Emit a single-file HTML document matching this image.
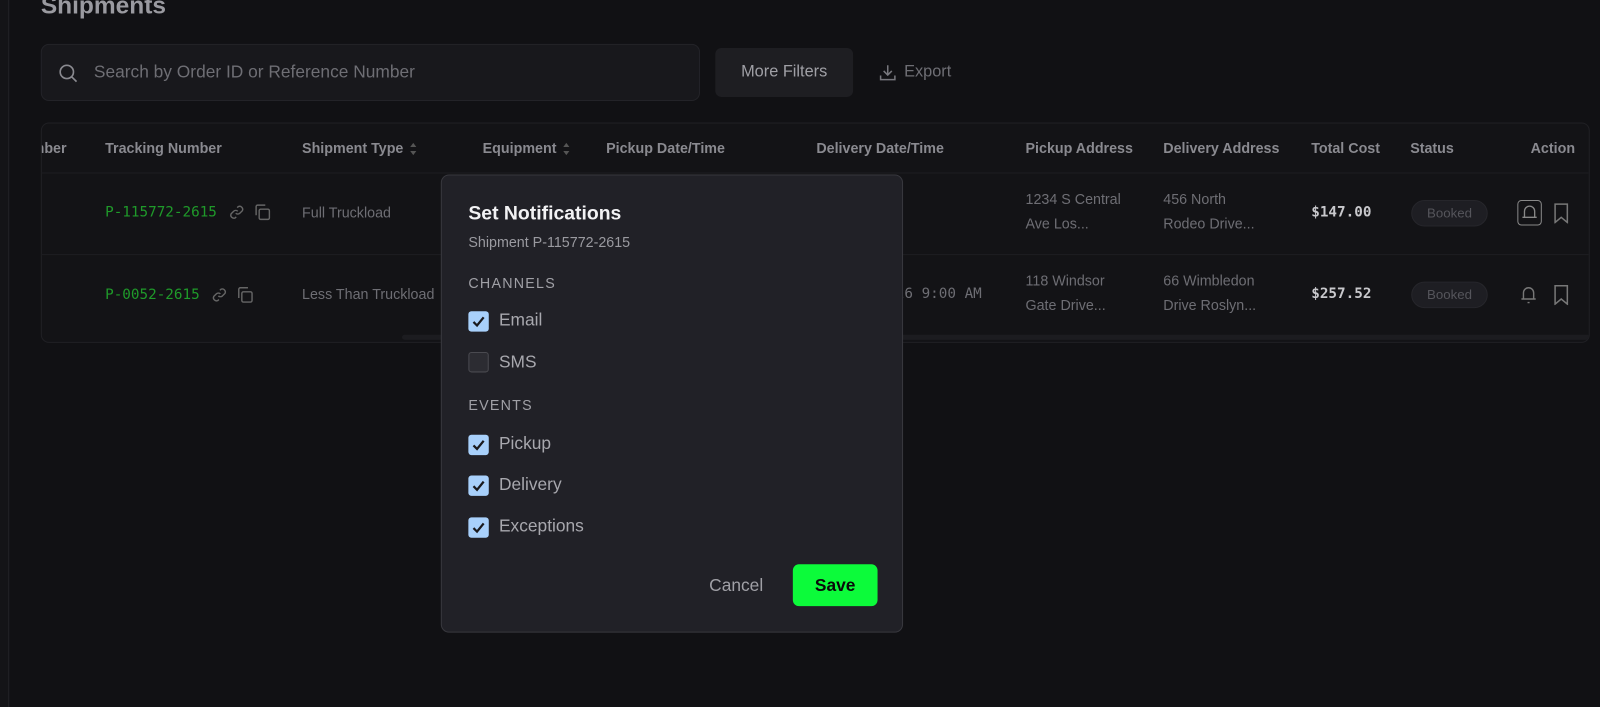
<!DOCTYPE html>
<html><head><meta charset="utf-8"><style>
*{box-sizing:border-box;margin:0;padding:0}
body{width:1600px;height:693px;background:#111114;font-family:"Liberation Sans",sans-serif;position:relative;overflow:hidden;color:#888}
#w{position:absolute;left:0;top:0;width:1568px;height:679px;transform:scale(1.0204);transform-origin:0 0}
.side{position:absolute;left:0;top:0;width:9px;height:693px;background:#141417;border-right:1px solid #222226}
.abs{position:absolute;white-space:nowrap}
h1{position:absolute;left:40px;top:-8px;font-size:24px;font-weight:bold;color:#9a9aa0}
.search{position:absolute;left:40px;top:43px;width:646px;height:56px;background:#18181c;border:1px solid #232328;border-radius:8px}
.btn{position:absolute;left:701px;top:47px;width:135px;height:48px;background:#1e1e22;border-radius:6px;color:#a0a0a6;font-size:16px;text-align:center;line-height:48px}
.table{position:absolute;left:40px;top:120px;width:1518px;height:216px;border:1px solid #202024;border-radius:8px;background:#131316;overflow:hidden}
.th{font-size:14px;font-weight:bold;color:#8a8a90;top:16px}
.mono{font-family:"DejaVu Sans Mono",monospace}
.g{color:#1f9a2a;font-size:14px}
.cell{font-size:14px;color:#6e6e74;line-height:24px}
.badge{position:absolute;width:75px;height:26px;border-radius:13px;background:#1e1e23;border:1px solid #26262b;color:#55555b;font-size:13px;text-align:center;line-height:24px}
.modal{position:absolute;left:432px;top:171px;width:453px;height:449px;background:#212127;border:1px solid #38383e;border-radius:8px}
.cb{position:absolute;left:26px;width:20px;height:20px;border-radius:3px;background:#a8d0fb}
.cb.off{background:#2c2c32;border:1px solid #4a4a50}
.lbl{position:absolute;left:56px;font-size:17px;color:#a8a8ae}
.sec{position:absolute;left:26px;font-size:14px;letter-spacing:1.2px;color:#a0a0a6}
.sort{display:inline-block;vertical-align:middle;margin-left:6px}
</style></head><body><div id="w">
<div class="side"></div>
<h1>Shipments</h1>
<div class="search">
<svg class="abs" style="left:16px;top:18px" width="20" height="20" viewBox="0 0 20 20" fill="none" stroke="#8a8a90" stroke-width="1.6"><circle cx="8.5" cy="8.5" r="6.5"/><path d="M13.5 13.5L18 18"/></svg>
<div class="abs" style="left:51px;top:17px;font-size:17px;color:#6e6e74">Search by Order ID or Reference Number</div>
</div>
<div class="btn">More Filters</div>
<svg class="abs" style="left:861px;top:62px" width="18" height="18" viewBox="0 0 18 18" fill="none" stroke="#77777d" stroke-width="1.5"><path d="M9 2v9M5 7.5l4 4 4-4M2 12v4h14v-4"/></svg>
<div class="abs" style="left:886px;top:62px;font-size:16px;color:#6e6e74">Export</div>

<div class="table">
<div class="abs" style="left:0;top:48px;width:1518px;height:1px;background:#1d1d21"></div>
<div class="abs" style="left:0;top:128px;width:1518px;height:1px;background:#1d1d21"></div>
<div class="abs" style="left:353px;top:207px;width:1165px;height:5px;background:#1c1c20;border-radius:3px"></div>
<div class="abs th" style="left:-10px">mber</div>
<div class="abs th" style="left:62px">Tracking Number</div>
<div class="abs th" style="left:255px">Shipment Type<svg class="sort" width="8" height="14" viewBox="0 0 8 14" fill="#555"><path d="M4 1l3 4H1zM4 13l3-4H1z"/></svg></div>
<div class="abs th" style="left:432px">Equipment<svg class="sort" width="8" height="14" viewBox="0 0 8 14" fill="#555"><path d="M4 1l3 4H1zM4 13l3-4H1z"/></svg></div>
<div class="abs th" style="left:553px">Pickup Date/Time</div>
<div class="abs th" style="left:759px">Delivery Date/Time</div>
<div class="abs th" style="left:964px">Pickup Address</div>
<div class="abs th" style="left:1099px">Delivery Address</div>
<div class="abs th" style="left:1244px">Total Cost</div>
<div class="abs th" style="left:1341px">Status</div>
<div class="abs th" style="left:1459px">Action</div>

<div class="abs mono g" style="left:62px;top:79px">P-115772-2615</div>
<svg class="abs" style="left:183px;top:79px" width="16" height="16" viewBox="0 0 16 16" fill="none" stroke="#666" stroke-width="1.4"><path d="M7 9a3 3 0 004 0l2.5-2.5a3 3 0 00-4-4L8.5 3.5M9 7a3 3 0 00-4 0L2.5 9.5a3 3 0 004 4l1-1"/></svg>
<svg class="abs" style="left:207px;top:78px" width="18" height="18" viewBox="0 0 18 18" fill="none" stroke="#666" stroke-width="1.4"><rect x="6" y="6" width="10" height="10" rx="1.5"/><path d="M3 12V3.5A1.5 1.5 0 014.5 2H12"/></svg>
<div class="abs cell" style="left:255px;top:75px">Full Truckload</div>
<div class="abs cell" style="left:964px;top:62px">1234 S Central<br>Ave Los...</div>
<div class="abs cell" style="left:1099px;top:62px">456 North<br>Rodeo Drive...</div>
<div class="abs mono" style="left:1244px;top:79px;font-size:14px;color:#c8c8cc;font-weight:bold">$147.00</div>
<div class="badge" style="left:1342px;top:75px">Booked</div>
<div class="abs" style="left:1446px;top:75px;width:24px;height:25px;border:1.5px solid #888;border-radius:4px"></div>
<svg class="abs" style="left:1449px;top:78px" width="18" height="18" viewBox="0 0 18 18" fill="none" stroke="#888" stroke-width="1.3"><path d="M4 14V8a5 5 0 0110 0v6M2 14h14"/></svg>
<svg class="abs" style="left:1481px;top:78px" width="16" height="20" viewBox="0 0 16 20" fill="none" stroke="#777" stroke-width="1.5"><path d="M2 1h12v18l-6-5-6 5z"/></svg>

<div class="abs mono g" style="left:62px;top:160px">P-0052-2615</div>
<svg class="abs" style="left:166px;top:160px" width="16" height="16" viewBox="0 0 16 16" fill="none" stroke="#666" stroke-width="1.4"><path d="M7 9a3 3 0 004 0l2.5-2.5a3 3 0 00-4-4L8.5 3.5M9 7a3 3 0 00-4 0L2.5 9.5a3 3 0 004 4l1-1"/></svg>
<svg class="abs" style="left:190px;top:159px" width="18" height="18" viewBox="0 0 18 18" fill="none" stroke="#666" stroke-width="1.4"><rect x="6" y="6" width="10" height="10" rx="1.5"/><path d="M3 12V3.5A1.5 1.5 0 014.5 2H12"/></svg>
<div class="abs cell" style="left:255px;top:155px">Less Than Truckload</div>
<div class="abs mono" style="left:820px;top:159px;font-size:14px;color:#6e6e74">2026 9:00 AM</div>
<div class="abs cell" style="left:964px;top:142px">118 Windsor<br>Gate Drive...</div>
<div class="abs cell" style="left:1099px;top:142px">66 Wimbledon<br>Drive Roslyn...</div>
<div class="abs mono" style="left:1244px;top:159px;font-size:14px;color:#c8c8cc;font-weight:bold">$257.52</div>
<div class="badge" style="left:1342px;top:155px">Booked</div>
<svg class="abs" style="left:1447px;top:157px" width="20" height="22" viewBox="0 0 20 22" fill="none" stroke="#777" stroke-width="1.4"><path d="M5 15V9a5 5 0 0110 0v6M3 15h14M9 18.5h2"/></svg>
<svg class="abs" style="left:1481px;top:158px" width="16" height="20" viewBox="0 0 16 20" fill="none" stroke="#777" stroke-width="1.5"><path d="M2 1h12v18l-6-5-6 5z"/></svg>
</div>

<div class="modal">
<div class="abs" style="left:26px;top:27px;font-size:19px;font-weight:bold;color:#f2f2f4">Set Notifications</div>
<div class="abs" style="left:26px;top:57px;font-size:14px;color:#9a9aa0">Shipment P-115772-2615</div>
<div class="sec" style="top:97px">CHANNELS</div>
<div class="cb" style="top:133px"></div><svg class="abs" style="left:29px;top:136px" width="14" height="14" viewBox="0 0 14 14" fill="none" stroke="#1a1a1e" stroke-width="2.2"><path d="M2 7.5l3.5 3.5L12 3"/></svg>
<div class="lbl" style="top:132px">Email</div>
<div class="cb off" style="top:173px"></div>
<div class="lbl" style="top:173px">SMS</div>
<div class="sec" style="top:217px">EVENTS</div>
<div class="cb" style="top:254px"></div><svg class="abs" style="left:29px;top:257px" width="14" height="14" viewBox="0 0 14 14" fill="none" stroke="#1a1a1e" stroke-width="2.2"><path d="M2 7.5l3.5 3.5L12 3"/></svg>
<div class="lbl" style="top:253px">Pickup</div>
<div class="cb" style="top:294px"></div><svg class="abs" style="left:29px;top:297px" width="14" height="14" viewBox="0 0 14 14" fill="none" stroke="#1a1a1e" stroke-width="2.2"><path d="M2 7.5l3.5 3.5L12 3"/></svg>
<div class="lbl" style="top:293px">Delivery</div>
<div class="cb" style="top:335px"></div><svg class="abs" style="left:29px;top:338px" width="14" height="14" viewBox="0 0 14 14" fill="none" stroke="#1a1a1e" stroke-width="2.2"><path d="M2 7.5l3.5 3.5L12 3"/></svg>
<div class="lbl" style="top:334px">Exceptions</div>
<div class="abs" style="left:262px;top:392px;font-size:17px;color:#a0a0a6">Cancel</div>
<div class="abs" style="left:344px;top:381px;width:83px;height:41px;background:#0cfb3a;border-radius:6px;text-align:center;line-height:41px;font-size:17px;font-weight:bold;color:#0a0a0a">Save</div>
</div>
</div></body></html>
